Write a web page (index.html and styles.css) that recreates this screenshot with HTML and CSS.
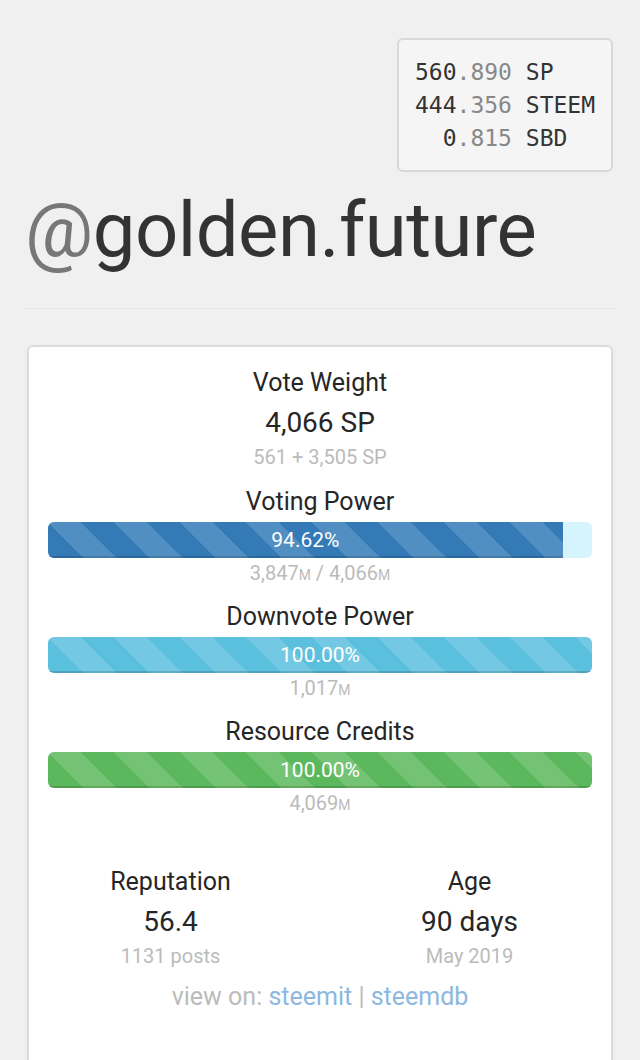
FILE: index.html
```html
<!DOCTYPE html>
<html>
<head>
<meta charset="utf-8">
<link rel="stylesheet" href="styles.css">
</head>
<body>
<div class="page">
  <div class="balance-wrap">
    <div class="balance"><div class="bal-line">560<span class="dec">.890</span> SP</div><div class="bal-line">444<span class="dec">.356</span> STEEM</div><div class="bal-line">  0<span class="dec">.815</span> SBD</div></div>
  </div>
  <h1 class="account"><span class="at">@</span>golden.future</h1>
  <hr class="divider">
  <div class="card">
    <div class="stat first">
      <div class="title">Vote Weight</div>
      <div class="value">4,066 SP</div>
      <div class="sub">561 + 3,505 SP</div>
    </div>
    <div class="stat meter">
      <div class="title">Voting Power</div>
      <div class="bar"><div class="fill fill-blue" style="width:94.62%">94.62%</div></div>
      <div class="sub">3,847<span class="unit">M</span> / 4,066<span class="unit">M</span></div>
    </div>
    <div class="stat meter">
      <div class="title">Downvote Power</div>
      <div class="bar"><div class="fill fill-cyan" style="width:100%">100.00%</div></div>
      <div class="sub">1,017<span class="unit">M</span></div>
    </div>
    <div class="stat meter">
      <div class="title">Resource Credits</div>
      <div class="bar"><div class="fill fill-green" style="width:100%">100.00%</div></div>
      <div class="sub">4,069<span class="unit">M</span></div>
    </div>
    <div class="columns">
      <div class="col">
        <div class="title">Reputation</div>
        <div class="value">56.4</div>
        <div class="sub">1131 posts</div>
      </div>
      <div class="col">
        <div class="title">Age</div>
        <div class="value">90 days</div>
        <div class="sub">May 2019</div>
      </div>
    </div>
    <div class="links">view on: <a href="#">steemit</a> | <a href="#">steemdb</a></div>
  </div>
</div>
</body>
</html>
```
FILE: styles.css
```css
html, body {
  margin: 0;
  padding: 0;
  background: #f0f0f0;
}
body {
  font-family: Roboto, "Liberation Sans", sans-serif;
  color: #2b2b2b;
}
.page {
  padding-top: 38px;
}
.balance-wrap {
  display: flex;
  justify-content: flex-end;
  padding-right: 27px;
}
.balance {
  width: 180px;
  padding: 16px 16px 15px 16px;
  border: 2px solid #d8d8d8;
  border-radius: 6px;
  background: #f5f5f5;
  font-family: "DejaVu Sans Mono", "Liberation Mono", monospace;
  font-size: 23px;
  line-height: 33px;
  color: #333;
}
.bal-line {
  white-space: pre;
}
.dec {
  color: #888;
}
.account {
  margin: 13px 0 0 0;
  padding-left: 25px;
  font-family: Roboto, sans-serif;
  font-weight: 400;
  font-size: 76px;
  line-height: 90px;
  color: #333;
  letter-spacing: -0.5px;
}
.at {
  color: #777;
}
.divider {
  margin: 33px 25px 0 25px;
  border: 0;
  border-top: 1px solid #e6e6e6;
  height: 0;
}
.card {
  margin: 36px 27px 0 27px;
  padding: 20px 19px 60px 19px;
  background: #fff;
  border: 2px solid #dcdcdc;
  border-radius: 6px;
  box-shadow: 0 1px 3px rgba(0,0,0,0.06);
  text-align: center;
}
.title {
  font-size: 25px;
  line-height: 32px;
  color: #262626;
}
.value {
  font-size: 28px;
  line-height: 48px;
  color: #262626;
}
.sub {
  font-size: 20px;
  line-height: 20px;
  color: #bbb;
}
.first .sub {
  padding-bottom: 6px;
}
.unit {
  font-size: 14px;
  line-height: 1;
}
.meter {
  margin-top: 13px;
}
.meter .sub {
  line-height: 30px;
  height: 30px;
}
.bar {
  margin-top: 4px;
  height: 36px;
  border-radius: 6px;
  background: #d6f4fd;
  overflow: hidden;
  display: flex;
}
.fill {
  height: 36px;
  font-size: 21px;
  line-height: 36px;
  color: #fff;
  text-align: center;
  box-shadow: inset 0 -2px 0 rgba(0,0,0,0.15);
  background-image: linear-gradient(45deg, rgba(255,255,255,0.15) 25%, transparent 25%, transparent 50%, rgba(255,255,255,0.15) 50%, rgba(255,255,255,0.15) 75%, transparent 75%, transparent);
  background-size: 66px 66px;
}
.fill-blue {
  background-color: #337ab7;
}
.fill-cyan {
  background-color: #5bc0de;
}
.fill-green {
  background-color: #5cb85c;
}
.columns {
  display: grid;
  grid-template-columns: 1fr 1fr;
  margin: 48px -27px 0 -27px;
}
.links {
  margin-top: 16px;
  font-size: 25px;
  line-height: 30px;
  color: #bbb;
}
.links a {
  color: #8db8df;
  text-decoration: none;
}
```
